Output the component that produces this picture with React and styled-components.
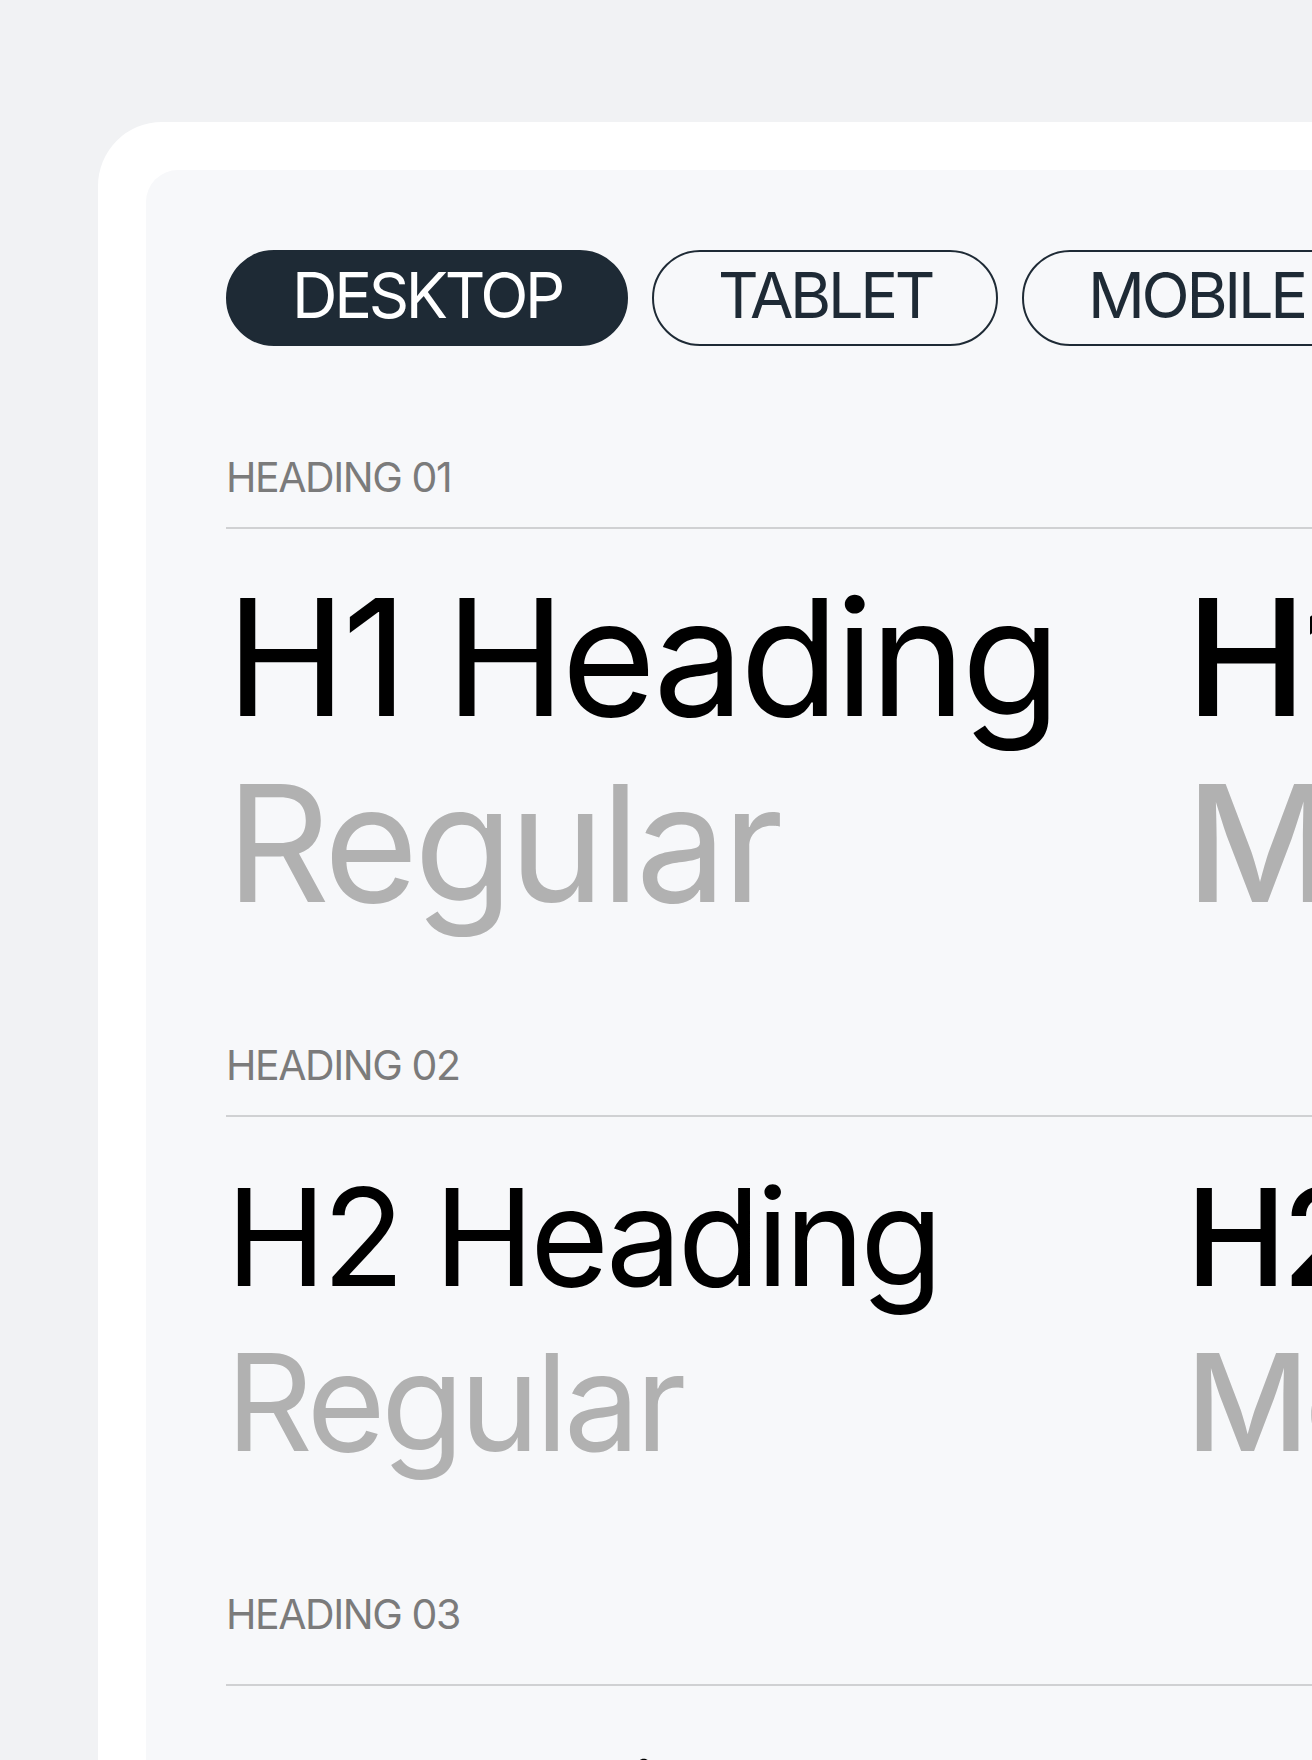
import React from "react";
import styled, { createGlobalStyle } from "styled-components";

const GlobalStyle = createGlobalStyle`
  html, body {
    margin: 0;
    padding: 0;
    overflow: hidden;
    background: #f1f2f4;
  }
  body {
    font-family: Inter, "Liberation Sans", Arial, sans-serif;
    -webkit-font-smoothing: antialiased;
  }
`;

const Page = styled.div`
  padding: 122px 0 0 98px;
  width: max-content;
`;

const Card = styled.div`
  background: #ffffff;
  border-radius: 64px;
  padding: 48px;
  width: max-content;
`;

const Panel = styled.div`
  background: #f7f8fa;
  border-radius: 32px;
  padding: 80px;
  display: flex;
  flex-direction: column;
`;

const Tabs = styled.div`
  display: flex;
  gap: 24px;
`;

const Tab = styled.button`
  box-sizing: border-box;
  height: 96px;
  padding: 0 64px 6px;
  border-radius: 48px;
  border: 2px solid #1e2a35;
  background: ${(p) => (p.$active ? "#1e2a35" : "transparent")};
  color: ${(p) => (p.$active ? "#ffffff" : "#1e2a35")};
  font-family: Inter, "Liberation Sans", Arial, sans-serif;
  font-size: 63px;
  font-weight: 400;
  letter-spacing: -0.053em;
  line-height: 1;
  display: flex;
  align-items: center;
  cursor: pointer;
`;

const Section = styled.section`
  margin-top: ${(p) => p.$top}px;
  display: flex;
  flex-direction: column;
`;

const Label = styled.div`
  font-size: 41px;
  line-height: 49px;
  letter-spacing: -0.035em;
  color: #7b7b7b;
`;

const Divider = styled.div`
  height: 2px;
  background: #d0d1d3;
  margin-top: ${(p) => p.$gap}px;
`;

const Grid = styled.div`
  display: grid;
  grid-template-columns: repeat(3, 900px);
  column-gap: 60px;
  margin-top: ${(p) => p.$gap}px;
`;

const Sample = styled.div`
  display: flex;
  flex-direction: column;
  font-size: ${(p) => p.$size}px;
  line-height: ${(p) => p.$lh}px;
  letter-spacing: ${(p) => p.$track}em;
  font-weight: ${(p) => p.$weight};
  white-space: nowrap;
`;

const Title = styled.span`
  color: #000000;
`;

const Weight = styled.span`
  color: #b1b1b1;
`;

const weights = [
  { name: "Regular", w: 400 },
  { name: "Medium", w: 500 },
  { name: "Bold", w: 700 },
];

const sections = [
  { label: "HEADING 01", title: "H1 Heading", size: 162, lh: 186, track: -0.026, top: 107, labelGap: 25, gridGap: 35 },
  { label: "HEADING 02", title: "H2 Heading", size: 135, lh: 165, track: -0.031, top: 105, labelGap: 25, gridGap: 38 },
  { label: "HEADING 03", title: "H3 Heading", size: 103, lh: 124, track: -0.031, top: 105, labelGap: 45, gridGap: 51 },
];

export default function App() {
  return (
    <>
      <GlobalStyle />
      <Page>
        <Card>
          <Panel>
            <Tabs>
              <Tab $active>DESKTOP</Tab>
              <Tab>TABLET</Tab>
              <Tab>MOBILE</Tab>
            </Tabs>
            {sections.map((s) => (
              <Section key={s.label} $top={s.top}>
                <Label>{s.label}</Label>
                <Divider $gap={s.labelGap} />
                <Grid $gap={s.gridGap}>
                  {weights.map((w) => (
                    <Sample
                      key={w.name}
                      $size={s.size}
                      $lh={s.lh}
                      $track={s.track}
                      $weight={w.w}
                    >
                      <Title>{s.title}</Title>
                      <Weight>{w.name}</Weight>
                    </Sample>
                  ))}
                </Grid>
              </Section>
            ))}
          </Panel>
        </Card>
      </Page>
    </>
  );
}
